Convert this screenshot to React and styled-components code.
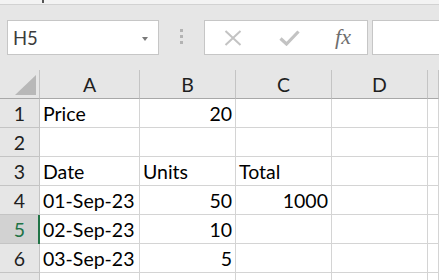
import React from "react";
import styled, { createGlobalStyle } from "styled-components";

const Global = createGlobalStyle`
  html, body { margin: 0; padding: 0; background: #ffffff; }
  body { font-family: Lato, "Liberation Sans", sans-serif; overflow: hidden; }
  * { box-sizing: border-box; }
`;

const Window = styled.div`
  width: 439px;
  height: 280px;
  overflow: hidden;
  display: flex;
  flex-direction: column;
`;

const TitleStrip = styled.div`
  height: 5px;
  flex: none;
  background: #f3f3f3;
  border-bottom: 1px solid #d2d2d2;
  padding-left: 42px;
`;

const Fragment = styled.div`
  width: 2px;
  height: 3px;
  background: #555;
`;

const FormulaBar = styled.div`
  height: 65px;
  flex: none;
  background: #e6e6e6;
  display: flex;
  align-items: flex-start;
  padding: 15px 0 0 7px;
`;

const Box = styled.div`
  height: 35px;
  background: #ffffff;
  border: 1px solid #c6c6c6;
  display: flex;
  align-items: center;
`;

const NameBox = styled(Box)`
  width: 152px;
  padding: 0 10px 0 5px;
  justify-content: space-between;
`;

const NameText = styled.span`
  font-size: 18.5px;
  color: #3c3c3c;
  line-height: 1;
  padding-top: 1px;
`;

const Caret = styled.span`
  width: 0;
  height: 0;
  border-left: 3.5px solid transparent;
  border-right: 3.5px solid transparent;
  border-top: 4px solid #7a7a7a;
  margin-top: 2px;
`;

const Grip = styled.div`
  width: 45px;
  height: 35px;
  display: flex;
  flex-direction: column;
  align-items: center;
  padding-top: 9px;
  gap: 3px;
`;

const Dot = styled.span`
  width: 3px;
  height: 3px;
  background: #b3b3b3;
`;

const ButtonGroup = styled(Box)`
  width: 164px;
  display: grid;
  grid-template-columns: 55px 55px 54px;
  align-items: center;
  justify-items: center;
`;

const IconSlot = styled.span`
  display: flex;
  align-items: center;
  justify-content: center;
  height: 33px;
  width: 100%;
  padding-left: ${(p) => p.$shift || 0}px;
`;

const FxLabel = styled.span`
  font-family: "Liberation Serif", "DejaVu Serif", serif;
  font-style: italic;
  font-size: 22px;
  color: #6e6e6e;
  line-height: 1;
  padding-left: 2px;
  padding-bottom: 2px;
`;

const FormulaInput = styled(Box)`
  flex: 1;
  margin-left: 4px;
  margin-right: -2px;
`;

const Sheet = styled.div`
  flex: 1;
  display: grid;
  grid-template-columns: 40px 100px 96px 96px 96px 1fr;
  grid-auto-rows: 29px;
  background: #ffffff;
`;

const Corner = styled.div`
  background: #e6e6e6;
  border-right: 1px solid #c4c4c4;
  border-bottom: 1px solid #a8a8a8;
  display: flex;
  align-items: flex-end;
  justify-content: flex-end;
  padding: 0 3px 3px 0;
`;

const ColHead = styled.div`
  background: #e6e6e6;
  border-right: 1px solid #c4c4c4;
  border-bottom: 1px solid #a8a8a8;
  text-align: center;
  font-size: 19.5px;
  line-height: 26px;
  padding-top: 2px;
  color: #1f1f1f;
`;

const RowHead = styled.div`
  position: relative;
  background: ${(p) => (p.$active ? "#d2d2d2" : "#e6e6e6")};
  color: ${(p) => (p.$active ? "#217346" : "#1f1f1f")};
  border-right: 1px solid #c4c4c4;
  border-bottom: 1px solid #c4c4c4;
  text-align: center;
  font-size: 19.5px;
  line-height: 28px;
  padding-top: 1px;
  &::after {
    content: "";
    display: ${(p) => (p.$active ? "block" : "none")};
    position: absolute;
    right: -1px;
    top: 0;
    width: 2px;
    height: 29px;
    background: #217346;
  }
`;

const Cell = styled.div`
  border-right: 1px solid #d4d4d4;
  border-bottom: 1px solid #d4d4d4;
  font-size: 19.5px;
  line-height: 28px;
  padding: 1px 3px 0 3px;
  color: #000000;
  text-align: ${(p) => (p.$num ? "right" : "left")};
  white-space: nowrap;
  overflow: hidden;
`;

const columns = ["A", "B", "C", "D", ""];

const rows = [
  { n: "1", cells: [{ v: "Price" }, { v: "20", num: true }, {}, {}, {}] },
  { n: "2", cells: [{}, {}, {}, {}, {}] },
  { n: "3", cells: [{ v: "Date" }, { v: "Units" }, { v: "Total" }, {}, {}] },
  { n: "4", cells: [{ v: "01-Sep-23" }, { v: "50", num: true }, { v: "1000", num: true }, {}, {}] },
  { n: "5", active: true, cells: [{ v: "02-Sep-23" }, { v: "10", num: true }, {}, {}, {}] },
  { n: "6", cells: [{ v: "03-Sep-23" }, { v: "5", num: true }, {}, {}, {}] },
  { n: "", cells: [{}, {}, {}, {}, {}] },
];

export default function App() {
  return (
    <>
      <Global />
      <Window>
        <TitleStrip>
          <Fragment />
        </TitleStrip>
        <FormulaBar>
          <NameBox>
            <NameText>H5</NameText>
            <Caret />
          </NameBox>
          <Grip>
            <Dot />
            <Dot />
            <Dot />
          </Grip>
          <ButtonGroup>
            <IconSlot>
              <svg width="18" height="16" viewBox="0 0 18 16">
                <path d="M1.5 1 L16.5 15 M16.5 1 L1.5 15" stroke="#c3c3c3" strokeWidth="2" fill="none" />
              </svg>
            </IconSlot>
            <IconSlot $shift={4}>
              <svg width="21" height="16" viewBox="0 0 21 16">
                <path d="M1.5 8.5 L7.5 14 L19.5 1.5" stroke="#c3c3c3" strokeWidth="3.2" fill="none" strokeLinejoin="miter" />
              </svg>
            </IconSlot>
            <IconSlot>
              <FxLabel>fx</FxLabel>
            </IconSlot>
          </ButtonGroup>
          <FormulaInput />
        </FormulaBar>
        <Sheet>
          <Corner>
            <svg width="21" height="20" viewBox="0 0 21 20">
              <polygon points="21,0 21,20 0,20" fill="#b8b8b8" />
            </svg>
          </Corner>
          {columns.map((c, i) => (
            <ColHead key={i}>{c}</ColHead>
          ))}
          {rows.map((r, ri) => (
            <React.Fragment key={ri}>
              <RowHead $active={r.active}>{r.n}</RowHead>
              {r.cells.map((cell, ci) => (
                <Cell key={ci} $num={cell.num}>
                  {cell.v || ""}
                </Cell>
              ))}
            </React.Fragment>
          ))}
        </Sheet>
      </Window>
    </>
  );
}
